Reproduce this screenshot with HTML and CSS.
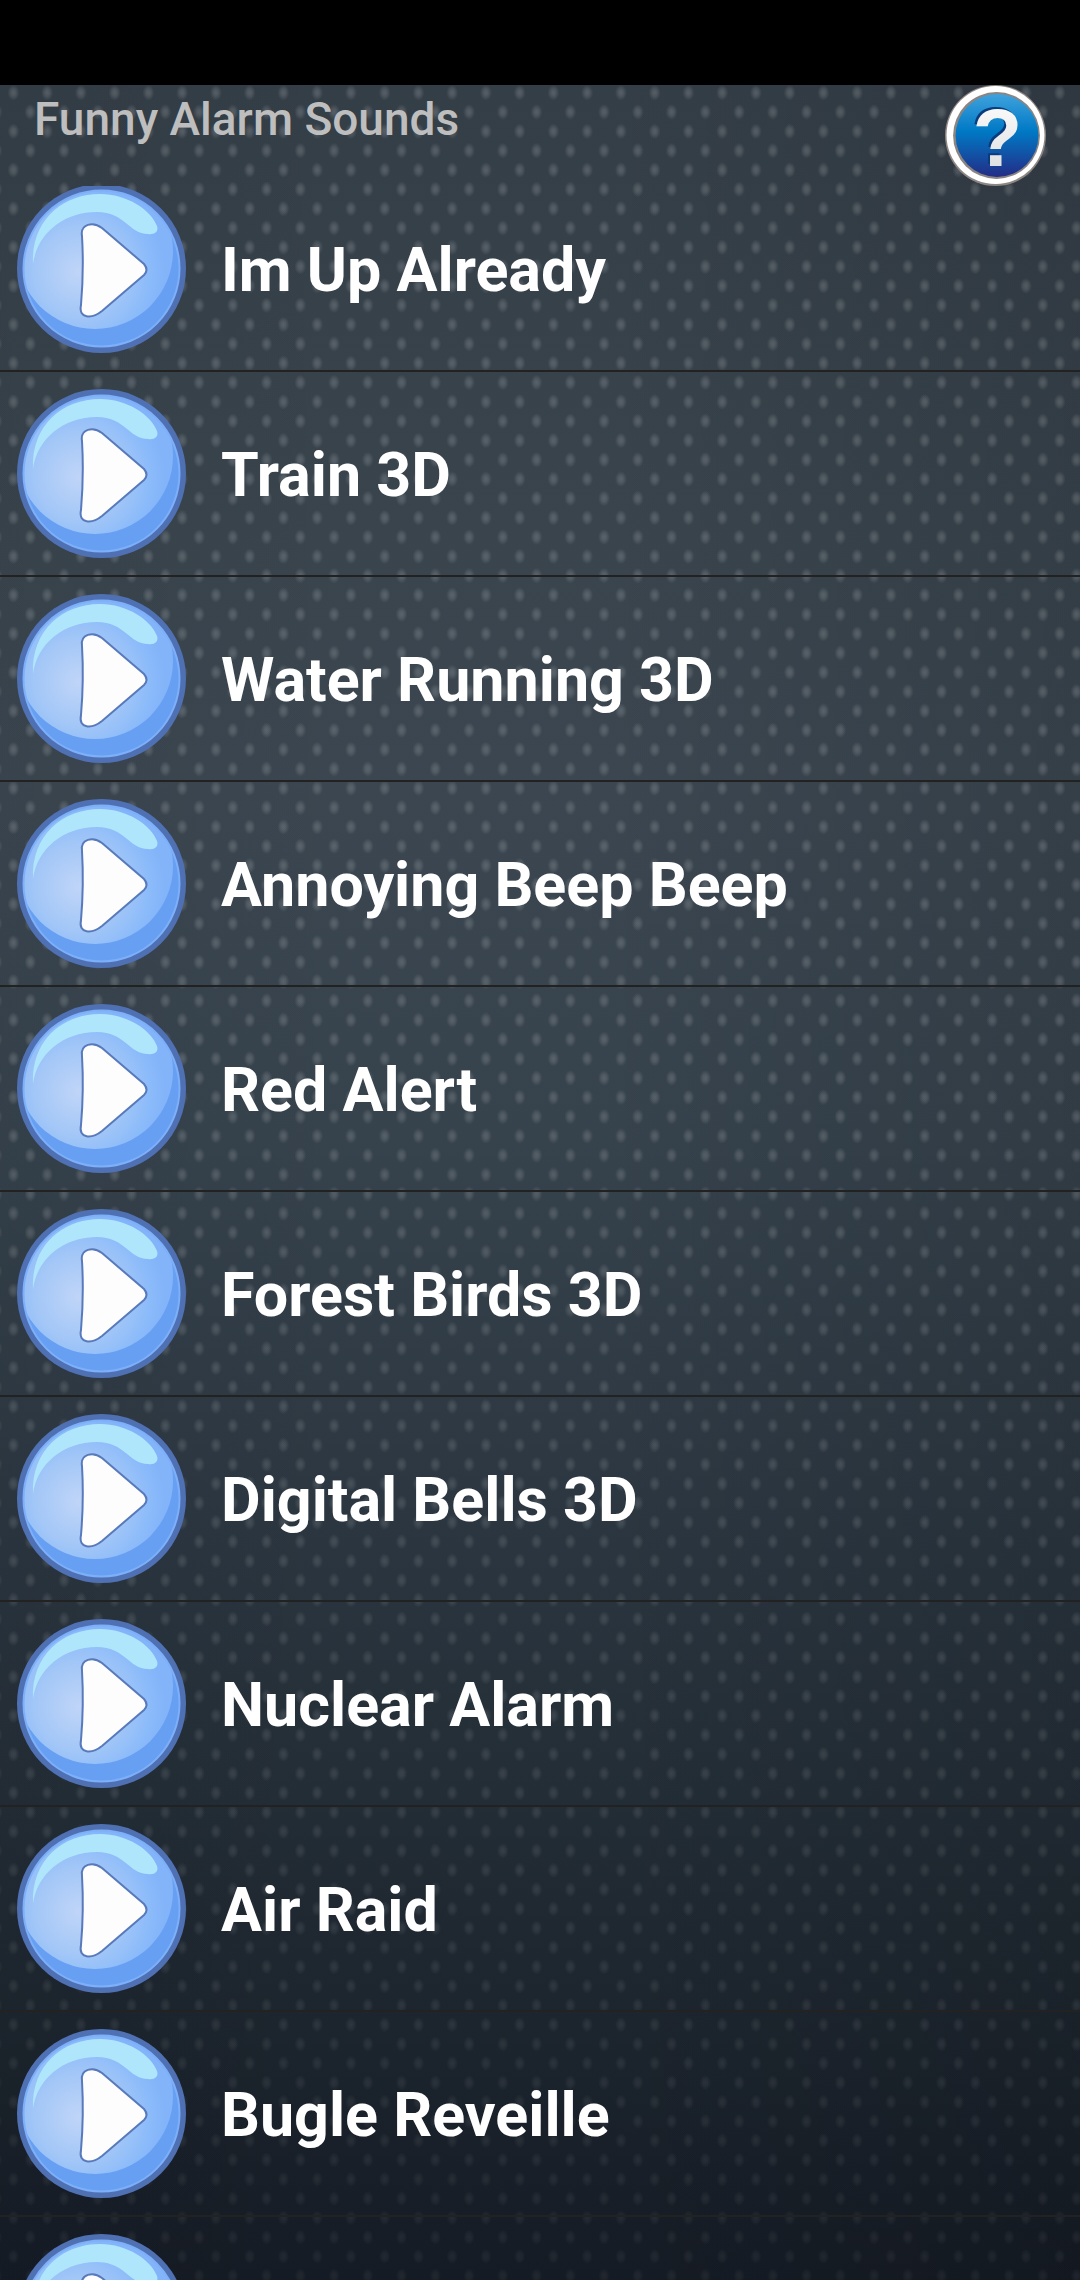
FILE: index.html
```html
<!DOCTYPE html>
<html lang="en">
<head>
    <meta charset="UTF-8">
    <meta name="viewport" content="width=device-width, initial-scale=1.0">
    <title>Funny Alarm Sounds</title>
    <link rel="stylesheet" href="styles.css">
</head>
<body>
    <!-- shared play icon -->
    <svg class="defs" aria-hidden="true">
        <defs>
            <radialGradient id="face" gradientUnits="userSpaceOnUse" cx="62" cy="88" r="86">
                <stop offset="0" stop-color="#c0d5f8"/>
                <stop offset="0.5" stop-color="#a3c7f7"/>
                <stop offset="0.85" stop-color="#8abafa"/>
                <stop offset="1" stop-color="#83b4f9"/>
            </radialGradient>
            <clipPath id="inner"><circle cx="84.5" cy="84.5" r="78"/></clipPath>
            <symbol id="play" viewBox="0 0 169 169">
                <circle cx="84.5" cy="84.5" r="84.5" fill="#4f71b4"/>
                <circle cx="84.5" cy="84.5" r="78" fill="#679ff2"/>
                <circle cx="78" cy="67" r="78" fill="url(#face)" clip-path="url(#inner)"/>
                <circle cx="84.5" cy="84.5" r="78" fill="none" stroke="#7db0f9" stroke-width="2"/>
                <path d="M16 80C14 36 46 10 83 10C110 10 134 26 140 42C142 48 137 51 131 50C112 50 108 28 80 28C46 28 20 50 16 80Z" fill="#b0e6fc"/>
                <path d="M65 52C63 40 76 37 85 44L127 80Q132 86 127 91L85 127C75 135 61 135 64 121Q67 86 65 52Z" fill="#fdfdfe" stroke="#587abb" stroke-width="2"/>
            </symbol>
        </defs>
    </svg>

    <div class="status-bar"></div>
    <main class="app">
        <svg class="dots" viewBox="0 0 1080 2195" preserveAspectRatio="none" aria-hidden="true">
            <defs>
                <radialGradient id="dot">
                    <stop offset="0" stop-color="#fff" stop-opacity="0.17"/>
                    <stop offset="0.4" stop-color="#fff" stop-opacity="0.13"/>
                    <stop offset="1" stop-color="#fff" stop-opacity="0"/>
                </radialGradient>
                <pattern id="mesh" patternUnits="userSpaceOnUse" x="5" y="-2" width="33.75" height="38.64">
                    <ellipse cx="8.4" cy="9.7" rx="6" ry="8" fill="url(#dot)"/>
                    <ellipse cx="25.3" cy="29" rx="6" ry="8" fill="url(#dot)"/>
                </pattern>
                <linearGradient id="fade" x1="0" y1="0" x2="0" y2="1">
                    <stop offset="0.45" stop-color="#fff"/>
                    <stop offset="1" stop-color="#555"/>
                </linearGradient>
                <mask id="fade-mask"><rect width="1080" height="2195" fill="url(#fade)"/></mask>
            </defs>
            <rect width="1080" height="2195" fill="url(#mesh)" mask="url(#fade-mask)"/>
        </svg>

        <header class="header">
            <h1 class="title">Funny Alarm Sounds</h1>
            <button class="help-btn" aria-label="Help">
                <svg class="help-icon" viewBox="0 0 100 100" aria-hidden="true">
                    <defs>
                        <linearGradient id="blue" x1="0" y1="0" x2="0" y2="1">
                            <stop offset="0" stop-color="#3fa2dd"/>
                            <stop offset="0.45" stop-color="#0079c5"/>
                            <stop offset="1" stop-color="#232c86"/>
                        </linearGradient>
                        <linearGradient id="mark" x1="0" y1="0" x2="0" y2="1">
                            <stop offset="0" stop-color="#fff"/>
                            <stop offset="1" stop-color="#d9dadd"/>
                        </linearGradient>
                    </defs>
                    <circle cx="50" cy="50" r="50" fill="#8d8783"/>
                    <circle cx="50" cy="49.5" r="48.5" fill="#fff"/>
                    <circle cx="51" cy="50" r="43" fill="#8b8582"/>
                    <circle cx="51.5" cy="50" r="41" fill="url(#blue)"/>
                    <text class="mark" x="50" y="78" fill="#0a3c7c">?</text>
                    <text class="mark" x="52" y="80" fill="url(#mark)">?</text>
                </svg>
            </button>
        </header>

        <ul class="sound-list">
            <li class="sound">
                <button class="play-btn" aria-labelledby="name-1"><svg><use href="#play"/></svg></button>
                <span class="name" id="name-1">Im Up Already</span>
            </li>
            <li class="sound">
                <button class="play-btn" aria-labelledby="name-2"><svg><use href="#play"/></svg></button>
                <span class="name" id="name-2">Train 3D</span>
            </li>
            <li class="sound">
                <button class="play-btn" aria-labelledby="name-3"><svg><use href="#play"/></svg></button>
                <span class="name" id="name-3">Water Running 3D</span>
            </li>
            <li class="sound">
                <button class="play-btn" aria-labelledby="name-4"><svg><use href="#play"/></svg></button>
                <span class="name" id="name-4">Annoying Beep Beep</span>
            </li>
            <li class="sound">
                <button class="play-btn" aria-labelledby="name-5"><svg><use href="#play"/></svg></button>
                <span class="name" id="name-5">Red Alert</span>
            </li>
            <li class="sound">
                <button class="play-btn" aria-labelledby="name-6"><svg><use href="#play"/></svg></button>
                <span class="name" id="name-6">Forest Birds 3D</span>
            </li>
            <li class="sound">
                <button class="play-btn" aria-labelledby="name-7"><svg><use href="#play"/></svg></button>
                <span class="name" id="name-7">Digital Bells 3D</span>
            </li>
            <li class="sound">
                <button class="play-btn" aria-labelledby="name-8"><svg><use href="#play"/></svg></button>
                <span class="name" id="name-8">Nuclear Alarm</span>
            </li>
            <li class="sound">
                <button class="play-btn" aria-labelledby="name-9"><svg><use href="#play"/></svg></button>
                <span class="name" id="name-9">Air Raid</span>
            </li>
            <li class="sound">
                <button class="play-btn" aria-labelledby="name-10"><svg><use href="#play"/></svg></button>
                <span class="name" id="name-10">Bugle Reveille</span>
            </li>
            <li class="sound">
                <button class="play-btn" aria-label="Play"><svg><use href="#play"/></svg></button>
            </li>
        </ul>
    </main>
</body>
</html>
```
FILE: styles.css
```css
* {
    box-sizing: border-box;
}

body {
    margin: 0;
    height: 100vh;
    display: flex;
    flex-direction: column;
    overflow: hidden;
    background: #000;
    color: white;
    font-family: Roboto, "Noto Sans", sans-serif;
}

button {
    padding: 0;
    border: none;
    background: none;
    cursor: pointer;
}

.defs {
    position: absolute;
    width: 0;
    height: 0;
}

.status-bar {
    height: 85px;
    flex-shrink: 0;
}

.app {
    position: relative;
    flex: 1;
    min-height: 0;
    display: flex;
    flex-direction: column;
    background:
        linear-gradient(90deg, rgba(0, 0, 0, 0.04), transparent 35%, transparent 55%, rgba(0, 0, 0, 0.1)),
        linear-gradient(#343e47 0%, #39444d 20%, #3b4650 32%, #36424c 48%, #2c3741 64%, #232d36 78%, #1b232c 90%, #151b24 100%);
}

/* mesh texture behind the content */
.dots {
    position: absolute;
    inset: 0;
    width: 100%;
    height: 100%;
}

.header {
    position: relative;
    display: flex;
    justify-content: space-between;
    align-items: flex-start;
    height: 101px;
    flex-shrink: 0;
    padding: 0 34px;
}

.title {
    margin: 0;
    font-size: 46px;
    line-height: 68px;
    font-weight: 500;
    color: #bebebe;
}

.help-btn,
.help-icon {
    display: block;
    width: 101px;
    height: 101px;
}

.mark {
    font-family: "Liberation Sans", sans-serif;
    font-size: 80px;
    font-weight: 700;
    text-anchor: middle;
}

.sound-list {
    position: relative;
    flex: 1;
    min-height: 0;
    margin: 0;
    padding: 0;
    list-style: none;
    overflow: hidden;
}

.sound {
    display: flex;
    align-items: center;
    gap: 35px;
    padding: 17px;
    border-bottom: 2px solid #232222;
}

/* list is scrolled slightly under the header */
.sound:first-child {
    margin-top: -19px;
}

.play-btn,
.play-btn svg {
    display: block;
    width: 169px;
    height: 169px;
    flex-shrink: 0;
}

.name {
    padding-top: 2px;
    font-size: 61px;
    line-height: 72px;
    font-weight: 700;
}
```
